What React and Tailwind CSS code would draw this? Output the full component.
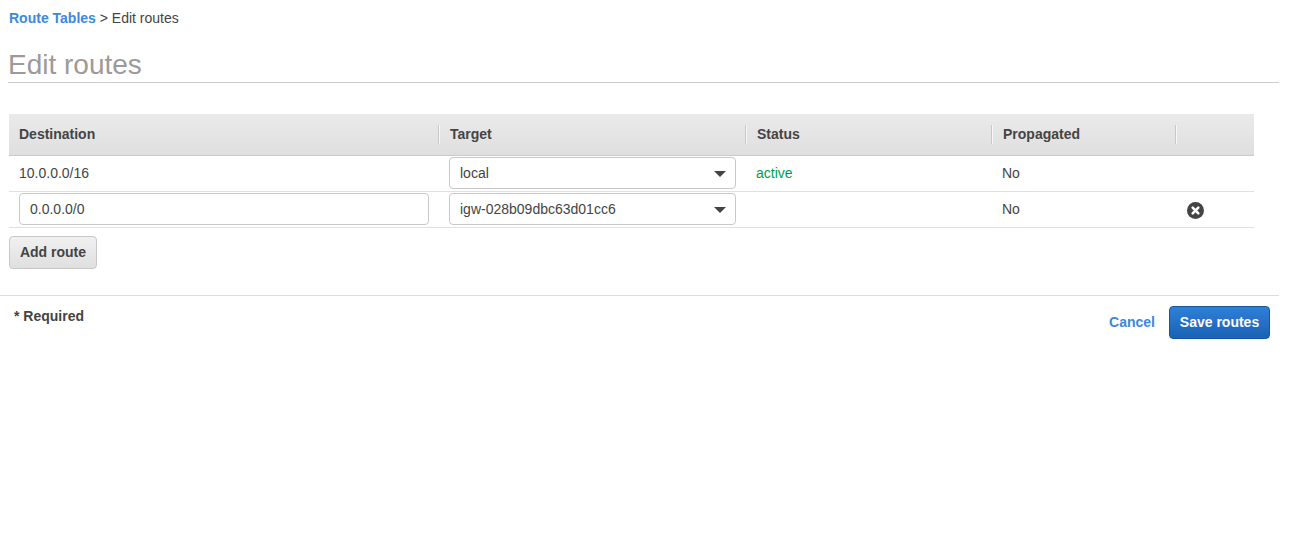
import React from 'react'

const columns = 'grid grid-cols-[430px_307px_246px_184px_78px]'

const HeaderCell = ({ children }) => {
  return (
    <div className="-ml-[1px] flex h-[19px] items-center">
      <div className="h-[19px] w-[2px] shrink-0 border-l border-[#c8c8c8] bg-white/70"></div>
      <span className="pl-[10px]">{children}</span>
    </div>
  )
}

const Select = ({ value }) => {
  return (
    <div className="flex h-[32px] w-[287px] items-center justify-between rounded-[4px] border border-[#c8c8c8] bg-white pl-[10px] pr-[9px]">
      <span>{value}</span>
      <div className="mt-[1px] h-0 w-0 border-x-[6px] border-t-[6px] border-x-transparent border-t-[#444444]"></div>
    </div>
  )
}

const App = () => {
  return (
    <div className="min-h-screen bg-white font-['Liberation_Sans',Arial,sans-serif] text-[14px] text-[#444444]">
      <div className="w-[1279px]">
        {/* Breadcrumb */}
        <div className="pl-[9px] pt-[10px] leading-[16px]">
          <a className="font-bold text-[#3b89dd]">Route Tables</a> &gt; Edit routes
        </div>

        {/* Title */}
        <h1 className="ml-[8px] mt-[21px] h-[36px] border-b border-[#cccccc] text-[28px] leading-[36px] text-[#9d9a9a]">Edit routes</h1>

        {/* Routes table */}
        <div className="ml-[9px] mt-[31px] w-[1245px]">
          <div className={`${columns} h-[42px] items-center border-b border-[#c9c9c9] bg-gradient-to-b from-[#eaeaea] to-[#dfdfdf] font-bold`}>
            <div className="pl-[10px]">Destination</div>
            <HeaderCell>Target</HeaderCell>
            <HeaderCell>Status</HeaderCell>
            <HeaderCell>Propagated</HeaderCell>
            <HeaderCell></HeaderCell>
          </div>

          <div className={`${columns} h-[36px] items-center border-b border-[#e0e0e0]`}>
            <div className="pl-[10px]">10.0.0.0/16</div>
            <div className="self-start pl-[10px] pt-[1px]"><Select value="local" /></div>
            <div className="pl-[10px] text-[#009d4f]">active</div>
            <div className="pl-[10px]">No</div>
            <div></div>
          </div>

          <div className={`${columns} h-[36px] items-center border-b border-[#e0e0e0]`}>
            <div className="self-start pl-[10px] pt-[1px]">
              <div className="flex h-[32px] w-[410px] items-center rounded-[4px] border border-[#c8c8c8] bg-white pl-[10px]">0.0.0.0/0</div>
            </div>
            <div className="self-start pl-[10px] pt-[1px]"><Select value="igw-028b09dbc63d01cc6" /></div>
            <div></div>
            <div className="pl-[10px]">No</div>
            <div className="pl-[11px] pt-[1px]">
              <svg width="17" height="17" viewBox="0 0 17 17" className="block">
                <circle cx="8.5" cy="8.5" r="8.5" fill="#444444" />
                <path d="M5.7 5.7l5.6 5.6M11.3 5.7l-5.6 5.6" stroke="#ffffff" strokeWidth="2.6" strokeLinecap="round" />
              </svg>
            </div>
          </div>

          <button className="mt-[8px] flex h-[33px] w-[88px] items-center justify-center rounded-[4px] border border-[#c8c8c8] bg-gradient-to-b from-[#f0f0f0] to-[#e0e0e0] font-bold text-[#444444]">
            Add route
          </button>
        </div>

        {/* Footer */}
        <div className="mt-[26px] flex justify-between border-t border-[#dddddd]">
          <div className="pl-[14px] pt-[12px] font-bold leading-[16px]">* Required</div>
          <div className="flex items-center pr-[9px] pt-[10px]">
            <a className="mr-[14px] font-bold text-[#3b89dd]">Cancel</a>
            <button className="h-[33px] w-[101px] rounded-[4px] border border-[#15589e] bg-gradient-to-b from-[#2f80d8] to-[#1a62b4] font-bold text-white">
              Save routes
            </button>
          </div>
        </div>
      </div>
    </div>
  )
}

export default App
